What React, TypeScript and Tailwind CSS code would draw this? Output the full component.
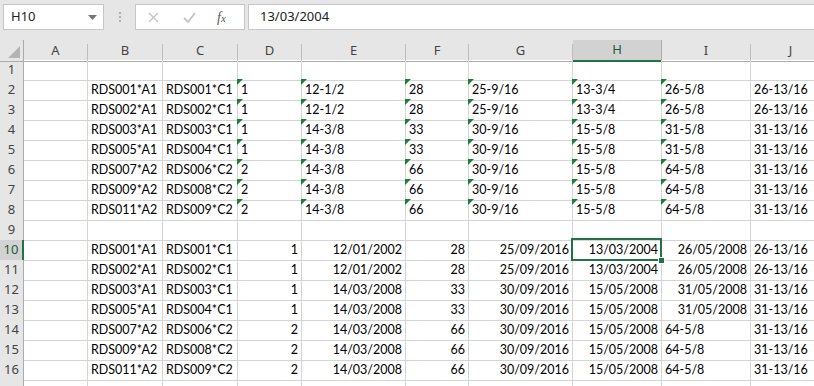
import React from 'react'

type Cell = { v: string; right?: boolean; tri?: boolean }

const COLS = ['A', 'B', 'C', 'D', 'E', 'F', 'G', 'H', 'I', 'J']

const B = ['RDS001*A1', 'RDS002*A1', 'RDS003*A1', 'RDS005*A1', 'RDS007*A2', 'RDS009*A2', 'RDS011*A2']
const C = ['RDS001*C1', 'RDS002*C1', 'RDS003*C1', 'RDS004*C1', 'RDS006*C2', 'RDS008*C2', 'RDS009*C2']
const D = ['1', '1', '1', '1', '2', '2', '2']
const F = ['28', '28', '33', '33', '66', '66', '66']
const J = ['26-13/16', '26-13/16', '31-13/16', '31-13/16', '31-13/16', '31-13/16', '31-13/16']

const textRows: Cell[][] = B.map((b, i) => [
  { v: '' },
  { v: b },
  { v: C[i] },
  { v: D[i], tri: true },
  { v: i < 2 ? '12-1/2' : '14-3/8', tri: true },
  { v: F[i], tri: true },
  { v: i < 2 ? '25-9/16' : '30-9/16', tri: true },
  { v: i < 2 ? '13-3/4' : '15-5/8', tri: true },
  { v: ['26-5/8', '26-5/8', '31-5/8', '31-5/8', '64-5/8', '64-5/8', '64-5/8'][i], tri: true },
  { v: J[i] },
])

const numRows: Cell[][] = B.map((b, i) => [
  { v: '' },
  { v: b },
  { v: C[i] },
  { v: D[i], right: true },
  { v: i < 2 ? '12/01/2002' : '14/03/2008', right: true },
  { v: F[i], right: true },
  { v: i < 2 ? '25/09/2016' : '30/09/2016', right: true },
  { v: i < 2 ? '13/03/2004' : '15/05/2008', right: true },
  i < 2
    ? { v: '26/05/2008', right: true }
    : i < 4
      ? { v: '31/05/2008', right: true }
      : { v: '64-5/8' },
  { v: J[i] },
])

const empty: Cell[] = COLS.map(() => ({ v: '' }))

// rows 1..17 (17 is only a sliver at the bottom edge)
const rows: Cell[][] = [empty, ...textRows, empty, ...numRows, empty]

function Toolbar() {
  return (
    <div className="flex h-10 items-start bg-[#e6e6e6] pt-1 font-['Noto_Sans',sans-serif] text-[13px] text-[#222]">
      <div className="ml-[3px] flex h-[26px] w-[101px] items-center justify-between border border-[#c6c6c6] bg-white pl-[7px] pr-[6px]">
        <span>H10</span>
        <svg width="9" height="5" viewBox="0 0 9 5">
          <path d="M0 0 H9 L4.5 5 Z" fill="#777" />
        </svg>
      </div>
      <div className="flex h-[26px] w-[31px] flex-col items-center justify-center gap-[2px]">
        <span className="h-[2px] w-[2px] bg-[#b0b0b0]" />
        <span className="h-[2px] w-[2px] bg-[#b0b0b0]" />
        <span className="h-[2px] w-[2px] bg-[#b0b0b0]" />
      </div>
      <div className="flex h-[26px] w-[110px] items-center border border-[#c6c6c6] bg-white">
        <svg className="ml-[12px]" width="11" height="11" viewBox="0 0 11 11">
          <path d="M1 1 L10 10 M10 1 L1 10" stroke="#c4c4c4" strokeWidth="1.4" />
        </svg>
        <svg className="ml-[24px]" width="13" height="11" viewBox="0 0 13 11">
          <path d="M1 6 L5 10 L12 1" stroke="#c4c4c4" strokeWidth="1.8" fill="none" />
        </svg>
        <span className="ml-[21px] font-['Liberation_Serif',serif] text-[14px] italic text-[#555]">
          f<span className="text-[11px]">x</span>
        </span>
      </div>
      <div className="ml-[3px] flex h-[26px] flex-1 items-center border border-r-0 border-[#c6c6c6] bg-white pl-[11px]">
        13/03/2004
      </div>
    </div>
  )
}

export default function App() {
  const gridCols = 'grid grid-cols-[24px_64px_75px_75px_64px_104px_63px_104px_89px_89px_80px]'
  return (
    <div className="h-[386px] w-[814px] overflow-hidden bg-white">
      <Toolbar />
      <div className="font-['Noto_Sans',sans-serif]">
        <div className={`${gridCols} h-5 bg-[#e6e6e6] text-[13px] text-[#444]`}>
          <div className="relative border-r border-b border-[#ababab]">
            <svg className="absolute right-[3px] bottom-[3px]" width="12" height="12" viewBox="0 0 12 12">
              <path d="M12 0 V12 H0 Z" fill="#b4b4b4" />
            </svg>
          </div>
          {COLS.map((c) =>
            c === 'H' ? (
              <div
                key={c}
                className="flex items-center justify-center border-r border-b-2 border-r-[#ababab] border-b-[#217346] bg-[#d2d2d2] text-[#1e5a3a]"
              >
                {c}
              </div>
            ) : (
              <div key={c} className="flex items-center justify-center border-b border-[#ababab]">
                <span className="flex-1 text-center">{c}</span>
                <span className="h-[17px] w-px self-end bg-[#bdbdbd]" />
              </div>
            )
          )}
        </div>
        {rows.map((r, ri) => {
          const n = ri + 1
          const sel = n === 10
          return (
            <div key={n} className={`${gridCols} h-5`}>
              <div
                className={
                  sel
                    ? 'flex items-center justify-center border-r-2 border-b border-r-[#217346] border-b-[#c8c8c8] bg-[#d2d2d2] text-[13px] text-[#1e5a3a]'
                    : 'flex items-center justify-center border-r border-b border-r-[#ababab] border-b-[#d0d0d0] bg-[#e6e6e6] text-[13px] text-[#444]'
                }
              >
                {n < 17 ? n : ''}
              </div>
              {r.map((cell, ci) => {
                const isSel = sel && ci === 7
                return (
                  <div
                    key={ci}
                    className={`relative border-r border-b border-[#d4d4d4] font-['Lato',sans-serif] text-[12.5px] leading-[20px] text-black ${
                      cell.right ? 'text-right' : 'text-left'
                    }`}
                  >
                    <div className="overflow-hidden whitespace-nowrap px-[3px]">{cell.v}</div>
                    {cell.tri && (
                      <svg className="absolute -top-px -left-px" width="6" height="6" viewBox="0 0 6 6">
                        <path d="M0 0 H6 L0 6 Z" fill="#1a8035" />
                      </svg>
                    )}
                    {isSel && (
                      <>
                        <div className="absolute -top-[2px] -right-px -bottom-px -left-[2px] z-10 border-2 border-[#217346]" />
                        <div className="absolute -right-[4px] -bottom-[4px] z-20 h-[7px] w-[7px] border border-white bg-[#217346]" />
                      </>
                    )}
                  </div>
                )
              })}
            </div>
          )
        })}
      </div>
    </div>
  )
}
